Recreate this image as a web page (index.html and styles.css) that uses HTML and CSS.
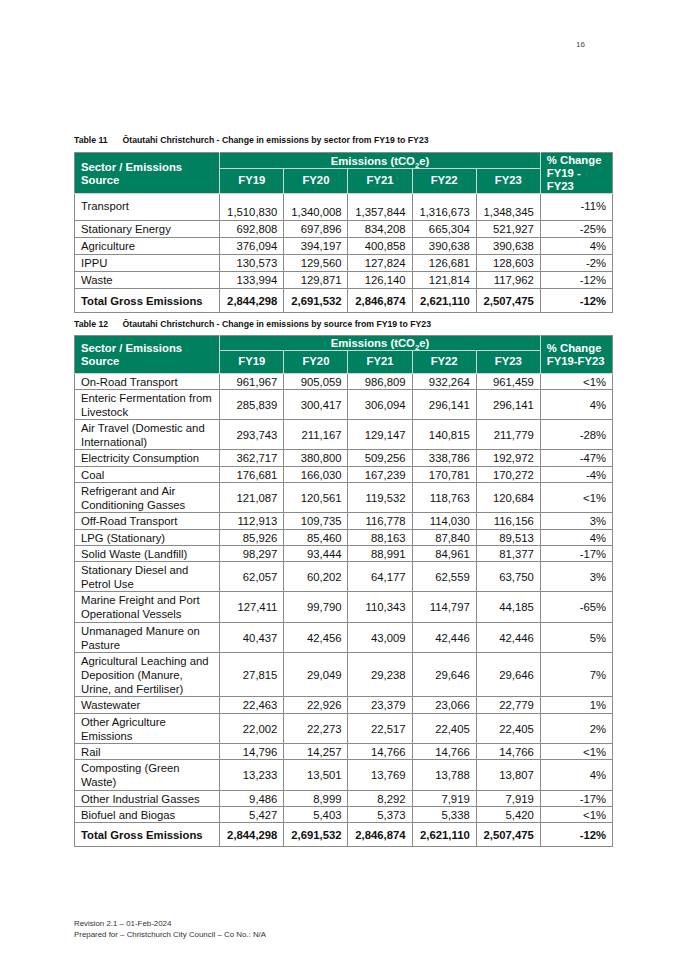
FILE: index.html
```html
<html>

<head>
  <link rel="stylesheet" href="styles.css">
</head>

<body>
  <div class="page">
    <div class="page-num">16</div>

    <p class="caption caption-first"><span class="caption-label">Table 11</span>Ōtautahi Christchurch - Change in emissions by sector from FY19 to FY23</p>
    <table class="emissions by-sector">
      <colgroup>
        <col class="col-name">
        <col class="col-num"><col class="col-num"><col class="col-num"><col class="col-num"><col class="col-num">
        <col class="col-pct">
      </colgroup>
      <thead>
        <tr>
          <th rowspan="2" class="head-name">Sector / Emissions Source</th>
          <th colspan="5" class="head-group">Emissions (tCO<sub>2</sub>e)</th>
          <th rowspan="2" class="head-pct">% Change FY19 - FY23</th>
        </tr>
        <tr class="head-years">
          <th>FY19</th><th>FY20</th><th>FY21</th><th>FY22</th><th>FY23</th>
        </tr>
      </thead>
      <tbody>
        <tr class="tall">
          <td class="name">Transport</td>
          <td>1,510,830</td><td>1,340,008</td><td>1,357,844</td><td>1,316,673</td><td>1,348,345</td>
          <td class="pct">-11%</td>
        </tr>
        <tr><td class="name">Stationary Energy</td><td>692,808</td><td>697,896</td><td>834,208</td><td>665,304</td><td>521,927</td><td>-25%</td></tr>
        <tr><td class="name">Agriculture</td><td>376,094</td><td>394,197</td><td>400,858</td><td>390,638</td><td>390,638</td><td>4%</td></tr>
        <tr><td class="name">IPPU</td><td>130,573</td><td>129,560</td><td>127,824</td><td>126,681</td><td>128,603</td><td>-2%</td></tr>
        <tr><td class="name">Waste</td><td>133,994</td><td>129,871</td><td>126,140</td><td>121,814</td><td>117,962</td><td>-12%</td></tr>
        <tr class="total"><td class="name">Total Gross Emissions</td><td>2,844,298</td><td>2,691,532</td><td>2,846,874</td><td>2,621,110</td><td>2,507,475</td><td>-12%</td></tr>
      </tbody>
    </table>

    <p class="caption"><span class="caption-label">Table 12</span>Ōtautahi Christchurch - Change in emissions by source from FY19 to FY23</p>
    <table class="emissions">
      <colgroup>
        <col class="col-name">
        <col class="col-num"><col class="col-num"><col class="col-num"><col class="col-num"><col class="col-num">
        <col class="col-pct">
      </colgroup>
      <thead>
        <tr>
          <th rowspan="2" class="head-name">Sector / Emissions Source</th>
          <th colspan="5" class="head-group">Emissions (tCO<sub>2</sub>e)</th>
          <th rowspan="2" class="head-pct">% Change FY19-FY23</th>
        </tr>
        <tr class="head-years">
          <th>FY19</th><th>FY20</th><th>FY21</th><th>FY22</th><th>FY23</th>
        </tr>
      </thead>
      <tbody>
        <tr><td class="name">On-Road Transport</td><td>961,967</td><td>905,059</td><td>986,809</td><td>932,264</td><td>961,459</td><td>&lt;1%</td></tr>
        <tr><td class="name">Enteric Fermentation from Livestock</td><td>285,839</td><td>300,417</td><td>306,094</td><td>296,141</td><td>296,141</td><td>4%</td></tr>
        <tr><td class="name">Air Travel (Domestic and International)</td><td>293,743</td><td>211,167</td><td>129,147</td><td>140,815</td><td>211,779</td><td>-28%</td></tr>
        <tr><td class="name">Electricity Consumption</td><td>362,717</td><td>380,800</td><td>509,256</td><td>338,786</td><td>192,972</td><td>-47%</td></tr>
        <tr><td class="name">Coal</td><td>176,681</td><td>166,030</td><td>167,239</td><td>170,781</td><td>170,272</td><td>-4%</td></tr>
        <tr><td class="name">Refrigerant and Air Conditioning Gasses</td><td>121,087</td><td>120,561</td><td>119,532</td><td>118,763</td><td>120,684</td><td>&lt;1%</td></tr>
        <tr><td class="name">Off-Road Transport</td><td>112,913</td><td>109,735</td><td>116,778</td><td>114,030</td><td>116,156</td><td>3%</td></tr>
        <tr><td class="name">LPG (Stationary)</td><td>85,926</td><td>85,460</td><td>88,163</td><td>87,840</td><td>89,513</td><td>4%</td></tr>
        <tr><td class="name">Solid Waste (Landfill)</td><td>98,297</td><td>93,444</td><td>88,991</td><td>84,961</td><td>81,377</td><td>-17%</td></tr>
        <tr><td class="name">Stationary Diesel and Petrol Use</td><td>62,057</td><td>60,202</td><td>64,177</td><td>62,559</td><td>63,750</td><td>3%</td></tr>
        <tr><td class="name">Marine Freight and Port Operational Vessels</td><td>127,411</td><td>99,790</td><td>110,343</td><td>114,797</td><td>44,185</td><td>-65%</td></tr>
        <tr><td class="name">Unmanaged Manure on Pasture</td><td>40,437</td><td>42,456</td><td>43,009</td><td>42,446</td><td>42,446</td><td>5%</td></tr>
        <tr><td class="name">Agricultural Leaching and Deposition (Manure, Urine, and Fertiliser)</td><td>27,815</td><td>29,049</td><td>29,238</td><td>29,646</td><td>29,646</td><td>7%</td></tr>
        <tr><td class="name">Wastewater</td><td>22,463</td><td>22,926</td><td>23,379</td><td>23,066</td><td>22,779</td><td>1%</td></tr>
        <tr><td class="name">Other Agriculture Emissions</td><td>22,002</td><td>22,273</td><td>22,517</td><td>22,405</td><td>22,405</td><td>2%</td></tr>
        <tr><td class="name">Rail</td><td>14,796</td><td>14,257</td><td>14,766</td><td>14,766</td><td>14,766</td><td>&lt;1%</td></tr>
        <tr><td class="name">Composting (Green Waste)</td><td>13,233</td><td>13,501</td><td>13,769</td><td>13,788</td><td>13,807</td><td>4%</td></tr>
        <tr><td class="name">Other Industrial Gasses</td><td>9,486</td><td>8,999</td><td>8,292</td><td>7,919</td><td>7,919</td><td>-17%</td></tr>
        <tr><td class="name">Biofuel and Biogas</td><td>5,427</td><td>5,403</td><td>5,373</td><td>5,338</td><td>5,420</td><td>&lt;1%</td></tr>
        <tr class="total"><td class="name">Total Gross Emissions</td><td>2,844,298</td><td>2,691,532</td><td>2,846,874</td><td>2,621,110</td><td>2,507,475</td><td>-12%</td></tr>
      </tbody>
    </table>

    <div class="footer">
      <div>Revision 2.1 – 01-Feb-2024</div>
      <div>Prepared for – Christchurch City Council – Co No.: N/A</div>
    </div>
  </div>
</body>

</html>
```

FILE: styles.css
```css
body {
  margin: 0;
  background: #fff;
  font-family: 'Liberation Sans', Arial, sans-serif;
  color: #111;
}

.page {
  width: 539px;
  padding: 40px 0 0 74px;
}

.page-num {
  font-size: 8px;
  line-height: 10px;
  color: #444;
  text-align: right;
  padding-right: 28px;
}

.caption {
  margin: 5.5px 0 5px;
  font-size: 8.7px;
  line-height: 11px;
  font-weight: bold;
  color: #111;
}

.caption-first {
  margin-top: 84.5px;
  margin-bottom: 6.5px;
}

.caption-label {
  display: inline-block;
  width: 48.5px;
}

.emissions {
  width: 539px;
  table-layout: fixed;
  border-collapse: collapse;
  border: 1px solid #8a8a8a;
  font-size: 11.3px;
}

.col-name {
  width: 145px;
}

.col-num {
  width: 64px;
}

.col-pct {
  width: 72px;
}

.emissions th {
  background: #00805f;
  color: #fff;
  font-weight: bold;
  line-height: 13px;
  padding: 1px 6px 0;
  border: 1px solid #c9d9d2;
}

.emissions thead tr:first-child th {
  border-top-color: #8a8a8a;
}

.head-name {
  text-align: left;
  vertical-align: middle;
  border-left-color: #8a8a8a !important;
}

.head-pct {
  text-align: left;
  vertical-align: middle;
  border-right-color: #8a8a8a !important;
}

.head-group {
  text-align: center;
}

.head-group sub {
  font-size: 70%;
  line-height: 0;
}

.head-years th {
  text-align: center;
  padding: 4px 6px 5px;
}

.emissions td {
  border: 1px solid #8a8a8a;
  padding: 1px 6px 0.3px;
  line-height: 14px;
  text-align: right;
  vertical-align: middle;
  white-space: nowrap;
}

.by-sector td {
  padding-bottom: 1px;
}

.emissions td.name {
  text-align: left;
  white-space: normal;
}

.tall td {
  height: 27px;
  vertical-align: bottom;
}

.tall td.name,
.tall td.pct {
  vertical-align: top;
  padding-top: 5px;
}

.emissions .total td {
  font-weight: bold;
  padding-top: 5px;
  padding-bottom: 4px;
}

.footer {
  margin-top: 72px;
  font-size: 7.9px;
  line-height: 10.5px;
  color: #333;
}
```
